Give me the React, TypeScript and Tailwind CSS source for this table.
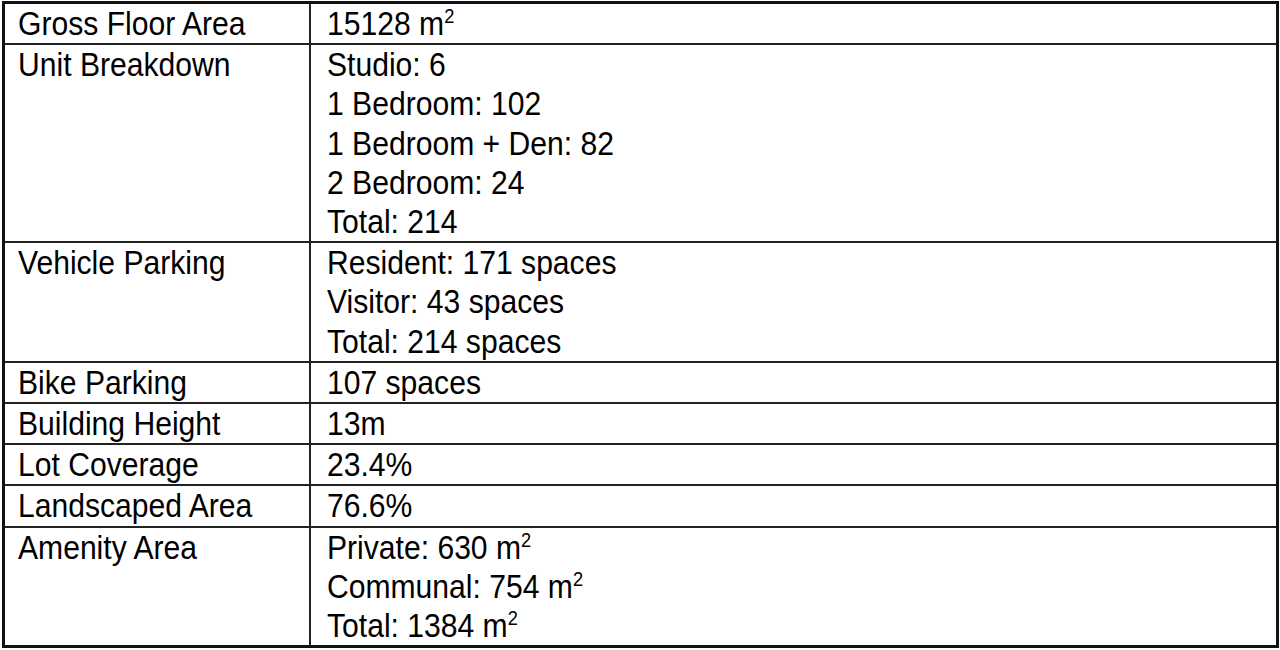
const Sq = () => <sup className="-top-[0.6em] text-[20px]">2</sup>;

const rows: { label: string; values: React.ReactNode[] }[] = [
  { label: 'Gross Floor Area', values: [<>15128 m<Sq /></>] },
  {
    label: 'Unit Breakdown',
    values: ['Studio: 6', '1 Bedroom: 102', '1 Bedroom + Den: 82', '2 Bedroom: 24', 'Total: 214'],
  },
  {
    label: 'Vehicle Parking',
    values: ['Resident: 171 spaces', 'Visitor: 43 spaces', 'Total: 214 spaces'],
  },
  { label: 'Bike Parking', values: ['107 spaces'] },
  { label: 'Building Height', values: ['13m'] },
  { label: 'Lot Coverage', values: ['23.4%'] },
  { label: 'Landscaped Area', values: ['76.6%'] },
  {
    label: 'Amenity Area',
    values: [
      <>Private: 630 m<Sq /></>,
      <>Communal: 754 m<Sq /></>,
      <>Total: 1384 m<Sq /></>,
    ],
  },
];

export default function App() {
  return (
    <div className="h-[650px] w-[1280px] bg-white pt-px pl-[2px]">
      <div
        className="w-[1277px] border-[3px] border-[#111] text-[33px] leading-[39.2px] text-black"
        style={{ fontFamily: '"Liberation Sans", Arial, sans-serif' }}
      >
        {rows.map((row, i) => (
          <div key={row.label} className={`flex ${i < rows.length - 1 ? 'border-b-2 border-[#222]' : ''}`}>
            <div className="w-[306px] shrink-0 border-r-2 border-[#222] pl-[13px]">
              <div className="origin-left scale-x-[0.912] whitespace-nowrap">{row.label}</div>
            </div>
            <div className="flex-1 pl-[16px]">
              {row.values.map((v, j) => (
                <div key={j} className="origin-left scale-x-[0.912] whitespace-nowrap">
                  {v}
                </div>
              ))}
            </div>
          </div>
        ))}
      </div>
    </div>
  );
}
